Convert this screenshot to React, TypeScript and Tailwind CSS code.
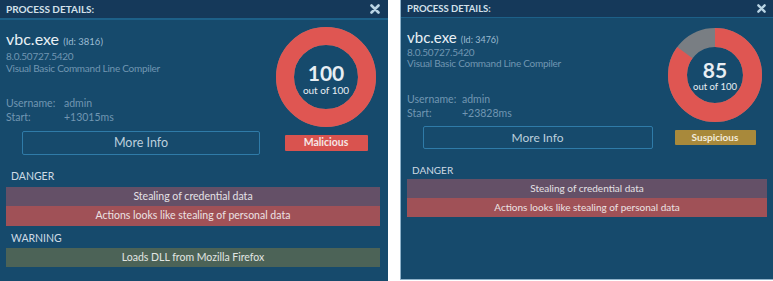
import React from "react";

function CloseIcon({ size }: { size: number }) {
  return (
    <svg width={size} height={size} viewBox="0 0 10 10">
      <path d="M1.5 1.5 L8.5 8.5 M8.5 1.5 L1.5 8.5" stroke="#b9d4e4" strokeWidth="2.6" strokeLinecap="round" />
    </svg>
  );
}

function Donut({ size, stroke, score }: { size: number; stroke: number; score: number }) {
  const r = size / 2 - stroke / 2;
  const c = 2 * Math.PI * r;
  const red = (score / 100) * c;
  return (
    <svg width={size} height={size} viewBox={`0 0 ${size} ${size}`}>
      <circle cx={size / 2} cy={size / 2} r={r} fill="none" stroke="#797e83" strokeWidth={stroke} />
      <circle
        cx={size / 2}
        cy={size / 2}
        r={r}
        fill="none"
        stroke="#df5652"
        strokeWidth={stroke}
        strokeDasharray={`${red} ${c}`}
        transform={`rotate(-90 ${size / 2} ${size / 2})`}
      />
    </svg>
  );
}

export default function App() {
  return (
    <div className="w-[773px] h-[281px] bg-white flex font-[Lato,sans-serif] overflow-hidden">
      {/* LEFT PANEL */}
      <div className="w-[388px] h-[281px] bg-[#164a6c] flex flex-col shrink-0">
        <div className="h-[20px] bg-[#15395a] border-b-2 border-[#1d6088] flex items-center justify-between pl-[6px] pr-[8px]">
          <span className="text-[10px] font-bold text-[#d3e0ea] leading-none">PROCESS DETAILS:</span>
          <CloseIcon size={10} />
        </div>
        <div className="pl-[6px] pr-[8px]">
          <div className="grid grid-cols-[1fr_100px] gap-y-[4px] mr-[4px]">
            <div className="pt-[10px]">
              <div className="leading-[17px] text-[#e9f0f5] whitespace-nowrap">
                <span className="text-[16px]">vbc.exe</span>{" "}
                <span className="text-[9.5px] text-[#9cbcd2]">(Id: 3816)</span>
              </div>
              <div className="text-[10px] leading-[12px] tracking-[-0.25px] text-[#7196b2]">8.0.50727.5420</div>
              <div className="text-[10px] leading-[12px] tracking-[-0.25px] text-[#7196b2]">Visual Basic Command Line Compiler</div>
              <div className="mt-[22px] text-[10.5px] leading-[14px] text-[#7196b2] grid grid-cols-[58px_1fr]">
                <span>Username:</span>
                <span>admin</span>
                <span>Start:</span>
                <span>+13015ms</span>
              </div>
            </div>
            <div className="pt-[7px] relative">
              <Donut size={100} stroke={18} score={100} />
              <div className="absolute left-0 right-0 top-[7px] h-[100px] pt-[3px] flex flex-col items-center justify-center text-[#e8eef3]">
                <span className="text-[21px] font-bold leading-[23px]">100</span>
                <span className="text-[10px] leading-[13px]">out of 100</span>
              </div>
            </div>
            <div className="flex justify-center">
              <div className="w-[238px] h-[24px] border border-[#2f7ba8] rounded-[2px] flex items-center justify-center text-[12.5px] text-[#bccfdd]">
                More Info
              </div>
            </div>
            <div className="flex items-center justify-center">
              <div className="w-[83px] h-[16px] bg-[#d9534f] rounded-[1px] flex items-center justify-center text-[10.5px] font-bold text-[#f5e6e5]">
                Malicious
              </div>
            </div>
          </div>
          <div className="mt-[14px] pl-[5px] text-[10.5px] leading-[14px] text-[#cfdbe5]">DANGER</div>
          <div className="mt-[4px]">
            <div className="h-[19px] bg-[#645067] flex items-center justify-center text-[10.5px] text-[#e4e2e6]">Stealing of credential data</div>
            <div className="h-[20px] bg-[#a05157] flex items-center justify-center text-[10.5px] text-[#ece2e3]">Actions looks like stealing of personal data</div>
          </div>
          <div className="mt-[5px] pl-[5px] text-[10.5px] leading-[14px] text-[#cfdbe5]">WARNING</div>
          <div className="mt-[3px]">
            <div className="h-[19px] bg-[#4c6357] flex items-center justify-center text-[10.5px] text-[#e2e6e3]">Loads DLL from Mozilla Firefox</div>
          </div>
        </div>
      </div>

      <div className="w-[12px] shrink-0" />

      {/* RIGHT PANEL */}
      <div className="w-[373px] h-[280px] bg-[#164a6c] border-l border-b border-[#8fb2c9] flex flex-col shrink-0">
        <div className="h-[18px] bg-[#15395a] border-b border-[#1d6088] flex items-center justify-between pl-[6px] pr-[7px]">
          <span className="text-[9.5px] font-bold text-[#d3e0ea] leading-none">PROCESS DETAILS:</span>
          <CloseIcon size={9} />
        </div>
        <div className="pl-[6px] pr-[6px]">
          <div className="grid grid-cols-[1fr_94px] gap-y-[4px] mr-[5px]">
            <div className="pt-[11px]">
              <div className="leading-[15px] text-[#e9f0f5] whitespace-nowrap">
                <span className="text-[15px]">vbc.exe</span>{" "}
                <span className="text-[9px] text-[#9cbcd2]">(Id: 3476)</span>
              </div>
              <div className="text-[10px] leading-[11px] tracking-[-0.25px] text-[#7196b2]">8.0.50727.5420</div>
              <div className="text-[10px] leading-[11px] tracking-[-0.25px] text-[#7196b2]">Visual Basic Command Line Compiler</div>
              <div className="mt-[23px] text-[10.5px] leading-[14px] text-[#7196b2] grid grid-cols-[55px_1fr]">
                <span>Username:</span>
                <span>admin</span>
                <span>Start:</span>
                <span>+23828ms</span>
              </div>
            </div>
            <div className="pt-[10px] relative">
              <Donut size={94} stroke={19} score={85} />
              <div className="absolute left-0 right-0 top-[10px] h-[94px] flex flex-col items-center justify-center text-[#e8eef3]">
                <span className="text-[21px] font-bold leading-[23px]">85</span>
                <span className="text-[9.5px] leading-[12px]">out of 100</span>
              </div>
            </div>
            <div className="flex justify-center">
              <div className="w-[230px] h-[23px] border border-[#2f7ba8] rounded-[2px] flex items-center justify-center text-[12px] text-[#bccfdd]">
                More Info
              </div>
            </div>
            <div className="flex items-center justify-center">
              <div className="w-[81px] h-[15px] bg-[#a8893b] rounded-[1px] flex items-center justify-center text-[10px] font-bold text-[#f3ecdc]">
                Suspicious
              </div>
            </div>
          </div>
          <div className="mt-[14px] pl-[5px] text-[10px] leading-[14px] text-[#cfdbe5]">DANGER</div>
          <div className="mt-[2px]">
            <div className="h-[19px] bg-[#645067] flex items-center justify-center text-[10px] text-[#e4e2e6]">Stealing of credential data</div>
            <div className="h-[19px] bg-[#a05157] flex items-center justify-center text-[10px] text-[#ece2e3]">Actions looks like stealing of personal data</div>
          </div>
        </div>
      </div>
    </div>
  );
}
